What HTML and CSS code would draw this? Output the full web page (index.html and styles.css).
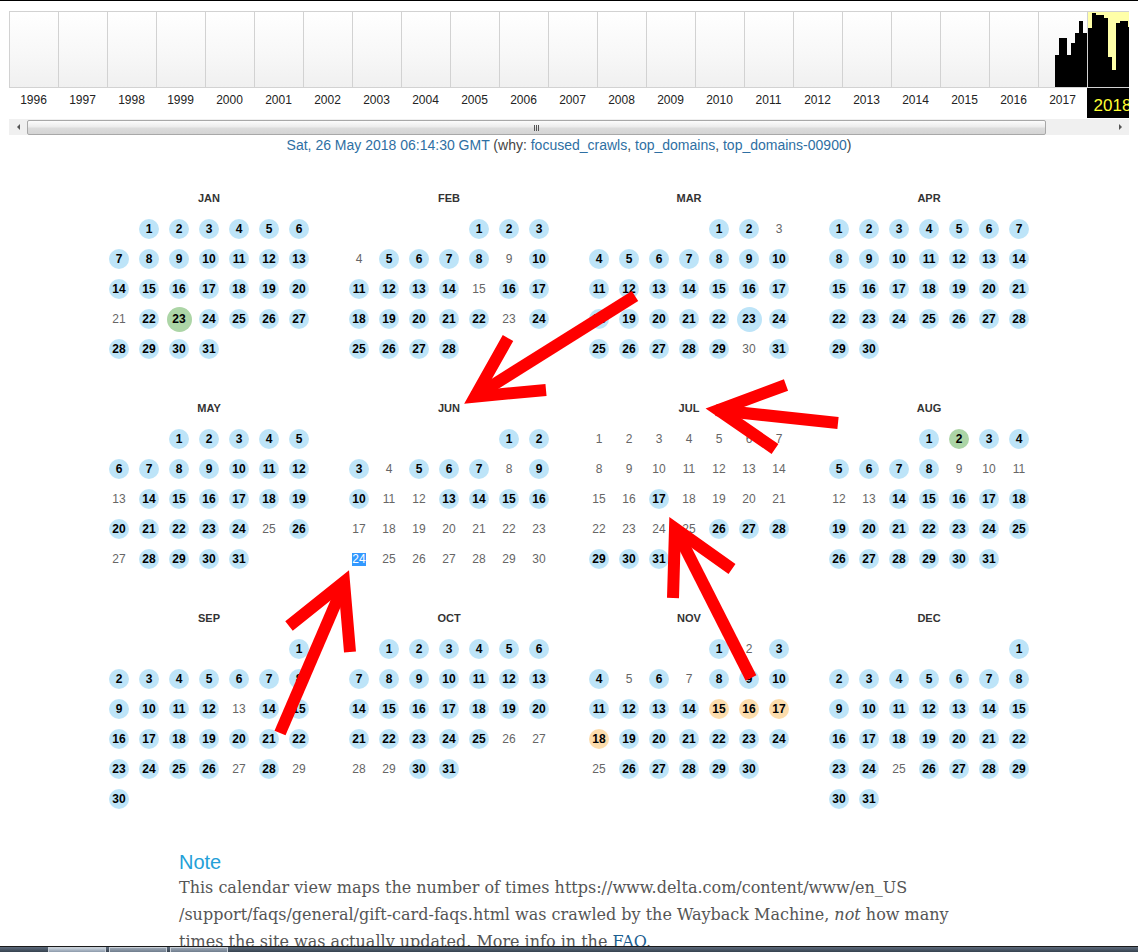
FILE: index.html
```html
<!DOCTYPE html>
<html>
<head>
<meta charset="utf-8">
<title>Wayback Machine calendar</title>
<link rel="stylesheet" href="styles.css">
</head>
<body>
<div class="page">
  <div class="timeline">
    <div class="track">
      <div class="chart">
        <div class="yr"></div><div class="yr"></div><div class="yr"></div><div class="yr"></div>
        <div class="yr"></div><div class="yr"></div><div class="yr"></div><div class="yr"></div>
        <div class="yr"></div><div class="yr"></div><div class="yr"></div><div class="yr"></div>
        <div class="yr"></div><div class="yr"></div><div class="yr"></div><div class="yr"></div>
        <div class="yr"></div><div class="yr"></div><div class="yr"></div><div class="yr"></div>
        <div class="yr"></div>
        <div class="yr">
          <i class="bar" style="height:0"></i><i class="bar" style="height:0"></i><i class="bar" style="height:0"></i><i class="bar" style="height:0"></i>
          <i class="bar" style="height:32px"></i><i class="bar" style="height:49px"></i><i class="bar" style="height:49px"></i><i class="bar" style="height:32px"></i>
          <i class="bar" style="height:44px"></i><i class="bar" style="height:54px"></i><i class="bar" style="height:66px"></i><i class="bar" style="height:54px"></i>
        </div>
        <div class="yr cur">
          <i class="bar" style="height:59px"></i><i class="bar" style="height:74px"></i><i class="bar" style="height:72px"></i><i class="bar" style="height:72px"></i>
          <i class="bar" style="height:69px"></i><i class="bar" style="height:30px"></i><i class="bar" style="height:17px"></i><i class="bar" style="height:64px"></i>
          <i class="bar" style="height:66px"></i><i class="bar" style="height:66px"></i><i class="bar" style="height:60px"></i><i class="bar" style="height:60px"></i>
        </div>
      </div>
      <div class="labels">
        <div class="yl">1996</div><div class="yl">1997</div><div class="yl">1998</div><div class="yl">1999</div>
        <div class="yl">2000</div><div class="yl">2001</div><div class="yl">2002</div><div class="yl">2003</div>
        <div class="yl">2004</div><div class="yl">2005</div><div class="yl">2006</div><div class="yl">2007</div>
        <div class="yl">2008</div><div class="yl">2009</div><div class="yl">2010</div><div class="yl">2011</div>
        <div class="yl">2012</div><div class="yl">2013</div><div class="yl">2014</div><div class="yl">2015</div>
        <div class="yl">2016</div><div class="yl">2017</div><div class="yl cur">2018</div>
      </div>
    </div>
    <div class="sbar">
      <div class="sbtn"><i class="tri-l"></i></div>
      <div class="thumb"><i class="grip"></i></div>
      <div class="sfill"></div>
      <div class="sbtn"><i class="tri-r"></i></div>
    </div>
  </div>

  <div class="caption"><span class="lnk">Sat, 26 May 2018 06:14:30 GMT</span> (why: <span class="lnk">focused_crawls</span>, <span class="lnk">top_domains</span>, <span class="lnk">top_domains-00900</span>)</div>

  <div class="cal">
    <div class="month"><div class="mname">JAN</div><div class="days">
      <b class="s2">1</b><b>2</b><b>3</b><b>4</b><b>5</b><b>6</b><b>7</b><b>8</b><b>9</b><b>10</b><b>11</b><b>12</b><b>13</b><b>14</b><b>15</b><b>16</b><b>17</b><b>18</b><b>19</b><b>20</b><span>21</span><b>22</b><b class="g lg">23</b><b>24</b><b>25</b><b>26</b><b>27</b><b>28</b><b>29</b><b>30</b><b>31</b>
    </div></div>
    <div class="month"><div class="mname">FEB</div><div class="days">
      <b class="s5">1</b><b>2</b><b>3</b><span>4</span><b>5</b><b>6</b><b>7</b><b>8</b><span>9</span><b>10</b><b>11</b><b>12</b><b>13</b><b>14</b><span>15</span><b>16</b><b>17</b><b>18</b><b>19</b><b>20</b><b>21</b><b>22</b><span>23</span><b>24</b><b>25</b><b>26</b><b>27</b><b>28</b>
    </div></div>
    <div class="month"><div class="mname">MAR</div><div class="days">
      <b class="s5">1</b><b>2</b><span>3</span><b>4</b><b>5</b><b>6</b><b>7</b><b>8</b><b>9</b><b>10</b><b>11</b><b>12</b><b>13</b><b>14</b><b>15</b><b>16</b><b>17</b><b>18</b><b>19</b><b>20</b><b>21</b><b>22</b><b class="lg">23</b><b>24</b><b>25</b><b>26</b><b>27</b><b>28</b><b>29</b><span>30</span><b>31</b>
    </div></div>
    <div class="month"><div class="mname">APR</div><div class="days">
      <b>1</b><b>2</b><b>3</b><b>4</b><b>5</b><b>6</b><b>7</b><b>8</b><b>9</b><b>10</b><b>11</b><b>12</b><b>13</b><b>14</b><b>15</b><b>16</b><b>17</b><b>18</b><b>19</b><b>20</b><b>21</b><b>22</b><b>23</b><b>24</b><b>25</b><b>26</b><b>27</b><b>28</b><b>29</b><b>30</b>
    </div></div>

    <div class="month"><div class="mname">MAY</div><div class="days">
      <b class="s3">1</b><b>2</b><b>3</b><b>4</b><b>5</b><b>6</b><b>7</b><b>8</b><b>9</b><b>10</b><b>11</b><b>12</b><span>13</span><b>14</b><b>15</b><b>16</b><b>17</b><b>18</b><b>19</b><b>20</b><b>21</b><b>22</b><b>23</b><b>24</b><span>25</span><b>26</b><span>27</span><b>28</b><b>29</b><b>30</b><b>31</b>
    </div></div>
    <div class="month"><div class="mname">JUN</div><div class="days">
      <b class="s6">1</b><b>2</b><b>3</b><span>4</span><b>5</b><b>6</b><b>7</b><span>8</span><b>9</b><b>10</b><span>11</span><span>12</span><b>13</b><b>14</b><b>15</b><b>16</b><span>17</span><span>18</span><span>19</span><span>20</span><span>21</span><span>22</span><span>23</span><span class="sel">24</span><span>25</span><span>26</span><span>27</span><span>28</span><span>29</span><span>30</span>
    </div></div>
    <div class="month"><div class="mname">JUL</div><div class="days">
      <span>1</span><span>2</span><span>3</span><span>4</span><span>5</span><span>6</span><span>7</span><span>8</span><span>9</span><span>10</span><span>11</span><span>12</span><span>13</span><span>14</span><span>15</span><span>16</span><b>17</b><span>18</span><span>19</span><span>20</span><span>21</span><span>22</span><span>23</span><span>24</span><span>25</span><b>26</b><b>27</b><b>28</b><b>29</b><b>30</b><b>31</b>
    </div></div>
    <div class="month"><div class="mname">AUG</div><div class="days">
      <b class="s4">1</b><b class="g">2</b><b>3</b><b>4</b><b>5</b><b>6</b><b>7</b><b>8</b><span>9</span><span>10</span><span>11</span><span>12</span><span>13</span><b>14</b><b>15</b><b>16</b><b>17</b><b>18</b><b>19</b><b>20</b><b>21</b><b>22</b><b>23</b><b>24</b><b>25</b><b>26</b><b>27</b><b>28</b><b>29</b><b>30</b><b>31</b>
    </div></div>

    <div class="month"><div class="mname">SEP</div><div class="days">
      <b class="s7">1</b><b>2</b><b>3</b><b>4</b><b>5</b><b>6</b><b>7</b><b>8</b><b>9</b><b>10</b><b>11</b><b>12</b><span>13</span><b>14</b><b>15</b><b>16</b><b>17</b><b>18</b><b>19</b><b>20</b><b>21</b><b>22</b><b>23</b><b>24</b><b>25</b><b>26</b><span>27</span><b>28</b><span>29</span><b>30</b>
    </div></div>
    <div class="month"><div class="mname">OCT</div><div class="days">
      <b class="s2">1</b><b>2</b><b>3</b><b>4</b><b>5</b><b>6</b><b>7</b><b>8</b><b>9</b><b>10</b><b>11</b><b>12</b><b>13</b><b>14</b><b>15</b><b>16</b><b>17</b><b>18</b><b>19</b><b>20</b><b>21</b><b>22</b><b>23</b><b>24</b><b>25</b><span>26</span><span>27</span><span>28</span><span>29</span><b>30</b><b>31</b>
    </div></div>
    <div class="month"><div class="mname">NOV</div><div class="days">
      <b class="s5">1</b><span>2</span><b>3</b><b>4</b><span>5</span><b>6</b><span>7</span><b>8</b><b>9</b><b>10</b><b>11</b><b>12</b><b>13</b><b>14</b><b class="o">15</b><b class="o">16</b><b class="o">17</b><b class="o">18</b><b>19</b><b>20</b><b>21</b><b>22</b><b>23</b><b>24</b><span>25</span><b>26</b><b>27</b><b>28</b><b>29</b><b>30</b>
    </div></div>
    <div class="month"><div class="mname">DEC</div><div class="days">
      <b class="s7">1</b><b>2</b><b>3</b><b>4</b><b>5</b><b>6</b><b>7</b><b>8</b><b>9</b><b>10</b><b>11</b><b>12</b><b>13</b><b>14</b><b>15</b><b>16</b><b>17</b><b>18</b><b>19</b><b>20</b><b>21</b><b>22</b><b>23</b><b>24</b><span>25</span><b>26</b><b>27</b><b>28</b><b>29</b><b>30</b><b>31</b>
    </div></div>
  </div>

  <div class="note">
    <h3 class="note-title">Note</h3>
    <p class="note-text">This calendar view maps the number of times https://www.delta.com/content/www/en_US<br>/support/faqs/general/gift-card-faqs.html was crawled by the Wayback Machine, <em>not</em> how many<br>times the site was actually updated. More info in the <a class="faq" href="#">FAQ</a>.</p>
  </div>
</div>

<svg class="arrows" width="1138" height="952" viewBox="0 0 1138 952">
  <g fill="none" stroke="#ff0000" stroke-width="12" stroke-linejoin="miter" stroke-miterlimit="10">
    <path d="M635 296 L474 397"/>
    <path d="M508 338 L475 396.6 L546 390"/>
    <path d="M838 423 L716 410"/>
    <path d="M786 385 L718.5 410 L775 449"/>
    <path d="M280 733 L344 584"/>
    <path d="M289 626 L344 582 L350 652"/>
    <path d="M751 678 L676 530"/>
    <path d="M673 598 L675 528.5 L732 569"/>
  </g>
</svg>

<div class="taskbar">
  <i class="tb-btn tb-a"></i><i class="tb-btn"></i><i class="tb-btn"></i>
</div>
</body>
</html>
```

FILE: styles.css
```css
html, body {
  margin: 0;
  padding: 0;
  background: #fff;
}
body {
  font-family: "Liberation Sans", Arial, sans-serif;
  color: #222;
  overflow: hidden;
}
.page {
  border-top: 1px solid #000;
  height: 951px;
}

/* timeline */
.timeline {
  margin: 10px 0 0 9px;
  width: 1120px;
  overflow: hidden;
}
.track {
  width: 1127px;
}
.chart {
  display: flex;
  height: 77px;
}
.yr {
  flex: 0 0 49px;
  box-sizing: border-box;
  border-left: 1px solid #d2d2d2;
  border-top: 1px solid #d2d2d2;
  border-bottom: 1px solid #d2d2d2;
  background: linear-gradient(#ffffff, #f7f7f7 60%, #f0f0f0);
  display: flex;
  align-items: flex-end;
}
.yr.cur {
  background: #ffffa8;
}
.bar {
  display: block;
  width: 4px;
  background: #000;
}
.labels {
  display: flex;
  height: 31px;
}
.yl {
  flex: 0 0 49px;
  text-align: center;
  font-size: 12px;
  line-height: 25px;
  color: #222;
}
.yl.cur {
  height: 30px;
  overflow: hidden;
  background: #000;
  color: #ffff33;
  font-size: 17px;
  line-height: 36px;
  text-indent: 2px;
}

/* scrollbar */
.sbar {
  display: flex;
  height: 16px;
  background: #f0f0f0;
}
.sbtn {
  flex: 0 0 18px;
  display: flex;
  align-items: center;
  justify-content: center;
}
.tri-l, .tri-r {
  display: block;
  width: 0;
  height: 0;
  border-top: 3px solid transparent;
  border-bottom: 3px solid transparent;
}
.tri-l { border-right: 3px solid #555; }
.tri-r { border-left: 3px solid #555; }
.thumb {
  flex: 0 0 1019px;
  box-sizing: border-box;
  height: 15px;
  margin-top: 1px;
  border: 1px solid #a8a8a8;
  border-radius: 2px;
  background: linear-gradient(#fcfcfc, #ececec 45%, #dcdcdc 55%, #d4d4d4);
  display: flex;
  align-items: center;
  justify-content: center;
}
.grip {
  display: block;
  width: 5px;
  height: 6px;
  background: repeating-linear-gradient(90deg, #555 0 1px, transparent 1px 2px);
}
.sfill {
  flex: 1 1 auto;
}

/* caption */
.caption {
  text-align: center;
  font-size: 14px;
  line-height: 21px;
  color: #444;
}
.lnk {
  color: #2e6fa3;
}

/* calendar */
.cal {
  width: 930px;
  margin: 28px auto 0;
  display: grid;
  grid-template-columns: repeat(4, 210px);
  column-gap: 30px;
}
.mname {
  height: 30px;
  line-height: 28px;
  text-align: center;
  font-weight: bold;
  font-size: 11px;
  color: #333;
}
.days {
  display: grid;
  grid-template-columns: repeat(7, 30px);
  grid-template-rows: repeat(6, 30px);
}
.days > b,
.days > span {
  justify-self: center;
  align-self: center;
  text-align: center;
  font-size: 12px;
}
.days > b {
  width: 20px;
  height: 20px;
  line-height: 20px;
  border-radius: 50%;
  background: #bde4f8;
  color: #000;
  font-weight: bold;
}
.days > b.lg {
  width: 25px;
  height: 25px;
  line-height: 25px;
}
.days > b.g { background: #acd5a6; }
.days > b.o { background: #fcdcac; }
.days > span {
  color: #666;
  line-height: 20px;
}
.days > span.sel {
  background: #3399ff;
  color: #fff;
  line-height: 13px;
  padding: 0;
}
.s2 { grid-column-start: 2; }
.s3 { grid-column-start: 3; }
.s4 { grid-column-start: 4; }
.s5 { grid-column-start: 5; }
.s6 { grid-column-start: 6; }
.s7 { grid-column-start: 7; }

/* note */
.note {
  width: 780px;
  margin: 36px auto 0;
}
.note-title {
  margin: 0;
  font-family: "Liberation Sans", Arial, sans-serif;
  font-weight: normal;
  font-size: 20px;
  line-height: 24px;
  color: #24a0d8;
}
.note-text {
  margin: 0;
  font-family: "DejaVu Serif", Georgia, serif;
  font-size: 16px;
  line-height: 27px;
  color: #555;
}
.faq {
  color: #1b5e8f;
  text-decoration: none;
}

/* overlay arrows */
.arrows {
  position: absolute;
  left: 0;
  top: 0;
  pointer-events: none;
}

/* os taskbar strip */
.taskbar {
  position: fixed;
  left: 0;
  right: 0;
  bottom: 0;
  height: 6px;
  background: linear-gradient(#1a1a1a 0 1px, #5d6b7c 1px, #36424f);
  display: flex;
  gap: 3px;
  padding-left: 48px;
}
.tb-btn {
  display: block;
  width: 58px;
  height: 5px;
  margin-top: 1px;
  background: linear-gradient(#9aa6b4, #6f7d8d);
  border: 1px solid #c9d0d8;
  border-bottom: 0;
  box-sizing: border-box;
}
.tb-a {
  background: linear-gradient(#c8d2dc, #8c9aab);
}
```
